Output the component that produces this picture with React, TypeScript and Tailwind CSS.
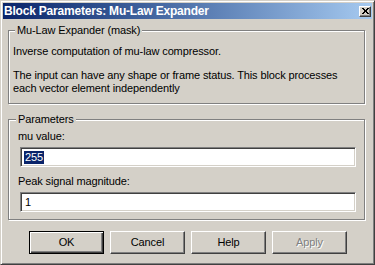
import React from 'react'

// Classic Win2000 dialog: Block Parameters for the Mu-Law Expander block
const raised =
  'border border-t-white border-l-white border-r-[#404040] border-b-[#404040] shadow-[inset_-1px_-1px_#808080]'
const etched = 'border border-[#808080] shadow-[1px_1px_0_#fff,inset_1px_1px_0_#fff]'
const sunken =
  'border border-t-[#808080] border-l-[#808080] border-r-white border-b-white shadow-[inset_1px_1px_#404040,inset_-1px_-1px_#d4d0c8] bg-white'

function Button({ label, isDefault, disabled }: { label: string; isDefault?: boolean; disabled?: boolean }) {
  const frame = isDefault
    ? 'border border-black shadow-[inset_1px_1px_#fff,inset_-1px_-1px_#404040,inset_-2px_-2px_#808080]'
    : raised
  return (
    <div
      className={`w-[75px] h-[23px] flex items-center justify-center bg-[#d4d0c8] ${frame} ${
        disabled ? 'text-[#808080] [text-shadow:1px_1px_0_#fff]' : 'text-black'
      }`}
    >
      {label}
    </div>
  )
}

function Field({ label, value, selected }: { label: string; value: string; selected?: boolean }) {
  return (
    <div className="flex flex-col">
      <div className="leading-[13px]">{label}</div>
      <div className={`mt-[4px] ml-[2px] w-[336px] h-[20px] flex items-center pl-[3px] ${sunken}`}>
        <span className={`leading-[13px] px-px ${selected ? 'bg-[#0a246a] text-white' : ''}`}>{value}</span>
      </div>
    </div>
  )
}

export default function App() {
  return (
    <div className="w-[375px] h-[265px] bg-[#d4d0c8] border border-t-[#d4d0c8] border-l-[#d4d0c8] border-r-[#404040] border-b-[#404040] shadow-[inset_1px_1px_#fff,inset_-1px_-1px_#808080] p-[2px] flex flex-col font-['Liberation_Sans',Arial,sans-serif] text-[11px] tracking-[-0.12px] text-black">
      {/* Title bar */}
      <div className="h-[16px] bg-linear-to-r from-[#0a246a] to-[#a6caf0] flex items-center justify-between pl-[1px] pr-[1px]">
        <span className="text-white font-bold text-[12px] tracking-[-0.2px] leading-[16px] whitespace-nowrap">
          Block Parameters: Mu-Law Expander
        </span>
        <div className={`w-[12px] h-[11px] bg-[#d4d0c8] flex items-center justify-center ${raised}`}>
          <svg width="7" height="6" viewBox="0 0 7 6" shapeRendering="crispEdges">
            <path d="M0 0h2v1H0zM5 0h2v1H5zM1 1h2v1H1zM4 1h2v1H4zM2 2h3v1H2zM2 3h3v1H2zM1 4h2v1H1zM4 4h2v1H4zM0 5h2v1H0zM5 5h2v1H5z" fill="#000" />
          </svg>
        </div>
      </div>

      {/* Mask description */}
      <fieldset className={`mt-[5px] ml-[5px] w-[357px] pl-[4px] pr-[4px] pt-[8px] pb-[8px] ${etched}`}>
        <legend className="ml-[2px] px-[2px] leading-[13px] bg-[#d4d0c8]">Mu-Law Expander (mask)</legend>
        <p className="leading-[13px]">Inverse computation of mu-law compressor.</p>
        <p className="leading-[13px] mt-[11px]">
          The input can have any shape or frame status. This block processes
          <br />
          each vector element independently
        </p>
      </fieldset>

      {/* Parameters */}
      <fieldset className={`mt-[9px] ml-[5px] w-[357px] pl-[9px] pt-[4px] pb-[7px] ${etched}`}>
        <legend className="-ml-[2px] px-[2px] leading-[13px] bg-[#d4d0c8]">Parameters</legend>
        <Field label="mu value:" value="255" selected />
        <div className="mt-[8px]">
          <Field label="Peak signal magnitude:" value="1" />
        </div>
      </fieldset>

      {/* Buttons */}
      <div className="mt-[11px] pl-[26px] flex gap-[6px]">
        <Button label="OK" isDefault />
        <Button label="Cancel" />
        <Button label="Help" />
        <Button label="Apply" disabled />
      </div>
    </div>
  )
}
